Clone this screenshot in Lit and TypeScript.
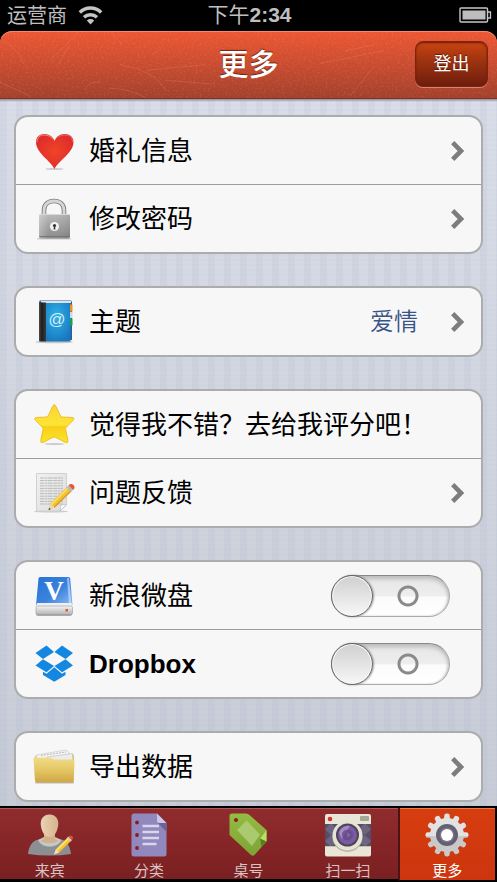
import { LitElement, html, css, svg, nothing, SVGTemplateResult } from "lit";
import { customElement, property } from "lit/decorators.js";
import { classMap } from "lit/directives/class-map.js";

interface Row {
  icon: string;
  label: string;
  kind: "link" | "plain" | "switch";
  value?: string;
}

const groups: Row[][] = [
  [
    { icon: "heart", label: "婚礼信息", kind: "link" },
    { icon: "lock", label: "修改密码", kind: "link" },
  ],
  [{ icon: "book", label: "主题", kind: "link", value: "爱情" }],
  [
    { icon: "star", label: "觉得我不错？去给我评分吧！", kind: "plain" },
    { icon: "note", label: "问题反馈", kind: "link" },
  ],
  [
    { icon: "disk", label: "新浪微盘", kind: "switch" },
    { icon: "dropbox", label: "Dropbox", kind: "switch" },
  ],
  [{ icon: "folder", label: "导出数据", kind: "link" }],
];

const tabs = [
  { icon: "guest", label: "来宾" },
  { icon: "list", label: "分类" },
  { icon: "tag", label: "桌号" },
  { icon: "camera", label: "扫一扫" },
  { icon: "gear", label: "更多", active: true },
];

const gearTeeth = Array.from({ length: 12 }, (_, i) => i * 30);
const noteLines = Array.from({ length: 11 }, (_, i) => 7 + i * 2.6);

// Row icons are drawn on a 42x44 board.
const rowIcons: Record<string, SVGTemplateResult> = {
  heart: svg`
    <defs>
      <radialGradient id="h" cx=".5" cy=".5" r=".6">
        <stop offset="0" stop-color="#f04426"/><stop offset="1" stop-color="#dc2a2c"/>
      </radialGradient>
    </defs>
    <ellipse cx="21.500" cy="40" rx="9" ry="1" fill="#ccc"/>
    <path d="M21.500 40 C18 32 3 24 3 13 C3 8 6.500 5 11.500 5 C16.500 5 20 8 21.700 12 C23 8 26.500 5 31.500 5 C37 5 40.500 8 40.500 13 C40.500 24 25 32 21.500 40Z" fill="url(#h)"/>
    <path d="M4 13 C4 8.500 7 6 11.500 6 C15 6 18 7.500 20 10.500" fill="none" stroke="#f58a80" stroke-width="1"/>
    <path d="M25 8.500 C27 6.500 30 6 32 6 C36.500 6 39.500 8.500 39.500 13" fill="none" stroke="#ee6a62" stroke-width="1"/>`,
  lock: svg`
    <defs>
      <linearGradient id="l" x1="0" y1="0" x2="0" y2="1">
        <stop offset="0" stop-color="#b9b9b9"/><stop offset=".5" stop-color="#a2a2a2"/><stop offset="1" stop-color="#8a8a8a"/>
      </linearGradient>
      <linearGradient id="l2" x1="0" y1="0" x2="1" y2="0">
        <stop offset="0" stop-color="#fff" stop-opacity=".3"/><stop offset=".3" stop-color="#fff" stop-opacity="0"/><stop offset="1" stop-color="#000" stop-opacity=".08"/>
      </linearGradient>
    </defs>
    <path d="M11 21 V13.500 C11 7.500 15 4 21 4 C27 4 31 7.500 31 13.500 V21" fill="none" stroke="#7e7e7e" stroke-width="4.600"/>
    <path d="M11 21 V13.500 C11 7.500 15 4 21 4 C27 4 31 7.500 31 13.500 V21" fill="none" stroke="#d6d6d6" stroke-width="2.800"/>
    <rect x="4" y="41" width="34" height="1.500" rx=".7" fill="#ccc"/>
    <rect x="6" y="17" width="31" height="24.500" rx="2" fill="url(#l)"/>
    <rect x="6" y="17" width="31" height="24.500" rx="2" fill="url(#l2)"/>
    <path d="M7 17.500 H36" stroke="#d8d8d8"/>
    <path d="M6.500 39.500 H36.500" stroke="#777"/>
    <circle cx="21.500" cy="29.500" r="4.500" fill="#f2f2f2"/>
    <circle cx="21.500" cy="28.500" r="1.600" fill="#333"/>
    <path d="M20.900 29 H22.100 L22.400 32.500 H20.600Z" fill="#333"/>`,
  book: svg`
    <defs>
      <radialGradient id="b" cx=".45" cy=".35" r=".7">
        <stop offset="0" stop-color="#2ab4ea"/><stop offset="1" stop-color="#1a76bf"/>
      </radialGradient>
      <linearGradient id="b2" x1="0" y1="0" x2="1" y2="0">
        <stop offset="0" stop-color="#4a4a4a"/><stop offset=".4" stop-color="#1e1e1e"/><stop offset="1" stop-color="#3a3a3a"/>
      </linearGradient>
    </defs>
    <ellipse cx="21" cy="42" rx="19" ry="1.300" fill="#c6c6c6"/>
    <path d="M6.500 0.500 H38 L39 2 V40 H12Z" fill="#2a5f99"/>
    <path d="M7.500 1 H38 V3 H9Z" fill="#dfe3e6"/>
    <rect x="12" y="3" width="25.500" height="38.500" fill="url(#b)"/>
    <path d="M6 1.500 L8 2.500 H13 V41.500 H7 L6 41Z" fill="url(#b2)"/>
    <path d="M37 4.500 H39.500 V11.500 H37Z" fill="#f39019"/>
    <path d="M37 12 H39.500 V18 H37Z" fill="#cfd8dd"/>
    <path d="M37 18.500 H39.500 V25.500 H37Z" fill="#17a05a"/>
    <text x="24" y="25" text-anchor="middle" class="at">@</text>`,
  star: svg`
    <defs>
      <linearGradient id="s" x1="0" y1="0" x2="0" y2="1">
        <stop offset="0" stop-color="#fbd43a"/><stop offset=".54" stop-color="#fde534"/><stop offset=".58" stop-color="#f8cf1c"/><stop offset="1" stop-color="#fbe524"/>
      </linearGradient>
    </defs>
    <ellipse cx="21.500" cy="41" rx="10" ry="1" fill="#ccc"/>
    <path d="M21.300 1.500 C23 1.500 26.500 12.500 28.300 13.700 C30 14.700 40.500 13.700 41 15.500 C41.400 17 33.200 23.500 32.600 25.300 C32.200 27 36 38.500 34.500 39.600 C33 40.600 23.500 34 21.300 34 C19.100 34 9.700 40.600 8.200 39.600 C6.700 38.500 10.500 27 10 25.300 C9.400 23.500 1.200 17 1.600 15.500 C2.100 13.700 12.600 14.700 14.300 13.700 C16.100 12.500 19.600 1.500 21.300 1.500Z" fill="url(#s)" stroke="#eebb22" stroke-width="1"/>`,
  note: svg`
    <defs>
      <linearGradient id="n" x1="0" y1="0" x2="1" y2="1">
        <stop offset="0" stop-color="#f1f1f1"/><stop offset="1" stop-color="#dcdcdc"/>
      </linearGradient>
    </defs>
    <ellipse cx="18" cy="40.500" rx="17" ry="1" fill="#ccc"/>
    <path d="M3.500 2.500 H33.500 V34 L27 40 H3.500Z" fill="url(#n)" stroke="#d0d0d0"/>
    ${noteLines.map((y) => svg`<path d=${`M7 ${y} H30`} stroke="#b9b9b9" stroke-width="1" stroke-dasharray="4 .6 2.500 .5 5 .7"/>`)}
    <path d="M27 40 L28 34 L33.500 33.500Z" fill="#fff" stroke="#bbb" stroke-width=".7"/>
    <path d="M15.500 39 L17.500 32.500 L34.500 15.500 L38.500 20 L21.500 36.500Z" fill="#f3c231"/>
    <path d="M18.500 33.500 L35.500 16.500" stroke="#fbe06c" stroke-width="1.600"/>
    <path d="M21 36.500 L38 20" stroke="#d79a22" stroke-width="1.200"/>
    <path d="M15.500 39 L17.500 32.500 L21.500 36.500Z" fill="#eed9ad"/>
    <path d="M15.500 39 L16.200 36.700 L17.800 38.200Z" fill="#333"/>
    <path d="M33.500 16.500 L35.500 14.500 L40 19 L38 21Z" fill="#aebdc6"/>
    <path d="M35.500 14.500 C37 12.500 39 12.500 40.500 14 C42 15.500 42 17.500 40 19Z" fill="#e5583a"/>`,
  disk: svg`
    <defs>
      <linearGradient id="d" x1="0" y1="0" x2="1" y2="1">
        <stop offset="0" stop-color="#2874d4"/><stop offset=".55" stop-color="#3a82dd"/><stop offset="1" stop-color="#8dbcf3"/>
      </linearGradient>
      <linearGradient id="d2" x1="0" y1="0" x2="0" y2="1">
        <stop offset="0" stop-color="#f4f4f4"/><stop offset="1" stop-color="#b4b4b4"/>
      </linearGradient>
    </defs>
    <rect x="3" y="38" width="36" height="4" rx="2" fill="#aaa"/>
    <path d="M7 3 H35.500 Q37 3 37.200 4.500 L39.500 31 H3 L5.500 4.500 Q5.700 3 7 3Z" fill="url(#d)"/>
    <path d="M34 4 H36 L38.500 30 H36Z" fill="#d5e6fb" opacity=".6"/>
    <path d="M4 29 L3 33 H39.500 L38.500 29Z" fill="#eef0f2"/>
    <rect x="3" y="32" width="36.500" height="8.500" rx="1.500" fill="url(#d2)" stroke="#999" stroke-width=".6"/>
    <rect x="32.500" y="35" width="2.500" height="2.500" fill="#e4572e"/>
    <text x="21" y="26" text-anchor="middle" class="vee">V</text>`,
  dropbox: svg`
    <g fill="#1487e0">
      <path d="M2.500 11 L13.500 3.500 L21 10 L10 17Z"/>
      <path d="M40 11 L29 3.500 L21.500 10 L32.500 17Z"/>
      <path d="M2.500 23.500 L10 17.200 L21 24 L13.500 30.300Z"/>
      <path d="M40 23.500 L32.500 17.200 L21.500 24 L29 30.300Z"/>
      <path d="M10 29.800 L13.500 31.700 L21.250 25.200 L29 31.700 L32.500 29.800 V33 L21.250 39.700 L10 33Z"/>
    </g>`,
  folder: svg`
    <defs>
      <linearGradient id="f" x1="0" y1="0" x2="0" y2="1">
        <stop offset="0" stop-color="#f0dc88"/><stop offset=".5" stop-color="#e4c763"/><stop offset="1" stop-color="#cfa545"/>
      </linearGradient>
    </defs>
    <rect x="2" y="36.500" width="39" height="2" rx="1" fill="#bbb"/>
    <path d="M1.500 13 L2.500 10.500 H13 L15 9 H39 Q41 9 41 11 V30 H2Z" fill="#dcc069"/>
    <path d="M3 12 L3.500 10 L33 5 L36 7.500 L37 18 H4Z" fill="#f4f4f4" stroke="#c4c4c4" stroke-width=".6"/>
    <path d="M8 10.500 L33 7" stroke="#aaa" stroke-dasharray="2 1" stroke-width=".8"/>
    <path d="M14 12 L39.500 8.500 L40 16 H14Z" fill="#ececec" stroke="#bbb" stroke-width=".6"/>
    <path d="M.500 14 Q.500 12.500 2 12.500 H16 Q18 12.500 19 13.500 Q20 14.500 22 14.500 H39.500 Q41.500 14.500 41.500 16 L40.800 35.500 Q40.700 37.500 39 37.500 H4 Q2.200 37.500 2 35.500Z" fill="url(#f)"/>`,
};

// Tab icons are drawn on a 48x44 board.
const tabIcons: Record<string, SVGTemplateResult> = {
  guest: svg`
    <defs>
      <linearGradient id="g" x1="0" y1="0" x2="1" y2="0">
        <stop offset="0" stop-color="#e9d2b4"/><stop offset="1" stop-color="#d6b48c"/>
      </linearGradient>
    </defs>
    <path d="M2 41 C3 33 6 27.500 13 26.500 L19 25 H29 L35 26.500 C41 27.500 44 33 45 41 Q24 44 2 41Z" fill="#8c8f92"/>
    <path d="M12 27 L18 24 H29 L35.500 27 C33 32 28 33.500 24 33.500 C19 33.500 14.500 32 12 27Z" fill="#c3c8cc"/>
    <path d="M18 17 H29 V25 C30 27 31 27 32.500 27.500 C29 31 18 31 14.500 27.500 C16 27 18 27 18 25Z" fill="#d2b088"/>
    <path d="M23.500 1.500 C29.500 1.500 32.500 6 32.300 11 C32 17 29 24 23.500 24 C18 24 15 17 14.700 11 C14.500 6 17.500 1.500 23.500 1.500Z" fill="url(#g)"/>
    <path d="M28 41.500 L30 36 L42 24 L45.500 27.500 L33 39.500Z" fill="#f5c531"/>
    <path d="M31 37 L43 25" stroke="#fde98a" stroke-width="1.300"/>
    <path d="M28 41.500 L30 36 L33 39.500Z" fill="#f0e0bd"/>
    <path d="M41 25 L42.500 23.500 L46 27 L44.500 28.500Z" fill="#c5ccd2"/>
    <path d="M42.500 23.500 Q44.500 21.500 46.300 23.200 Q48 25 46 27Z" fill="#e0502f"/>`,
  list: svg`
    <path d="M8.500 .500 H32 L41.500 10 V41 Q41.500 43.500 39 43.500 H9 Q6.500 43.500 6.500 41 V3 Q6.500 .500 9 .500Z" fill="#9189bd"/>
    <path d="M32 .500 L41.500 10 H34.500 Q32 10 32 8Z" fill="#cdc8e8"/>
    <path d="M33 10 H41.500 V19Z" fill="#6b6492"/>
    <g fill="#861f22"><circle cx="12" cy="9.500" r="1.900"/><circle cx="12" cy="22" r="1.900"/><circle cx="12" cy="35" r="1.900"/></g>
    <path d="M17.500 13 H34 M17.500 19 H34 M17.500 25 H34 M17.500 31 H31.500" stroke="#d9d5ee" stroke-width="2.400"/>`,
  tag: svg`
    <defs>
      <linearGradient id="t" x1="0" y1="0" x2="0" y2="1">
        <stop offset="0" stop-color="#94bb42"/><stop offset="1" stop-color="#7ea335"/>
      </linearGradient>
    </defs>
    <path d="M8 .500 H22 Q24 .500 25.500 2 L42.500 17 V28.500 L30.500 42 Q29 43.500 27 42 L5.500 22 V3 Q5.500 .500 8 .500Z" fill="url(#t)"/>
    <path d="M13 17 L22.500 7.500 L36 21.500 L28 33Z" fill="#a9ca6e"/>
    <path d="M42.500 17 L36 26 L42.500 28.500Z" fill="#b9e062"/>
    <path d="M36 25.500 L42.500 28.500 L37.500 34Z" fill="#557f22"/>
    <circle cx="12" cy="7" r="2" fill="#861f22"/>`,
  camera: svg`
    <defs>
      <clipPath id="c"><rect x="1" y="11" width="46" height="22"/></clipPath>
    </defs>
    <rect x="1" y="1" width="46" height="42.500" rx="2" fill="#e9e6d8"/>
    <rect x="1" y="11" width="46" height="22" fill="#554e66"/>
    <g clip-path="url(#c)" fill="#6c6480">
      <path d="M1 16 L7 10 L13 16 L7 22Z M1 28 L7 22 L13 28 L7 34Z M35 16 L41 10 L47 16 L41 22Z M35 28 L41 22 L47 28 L41 34Z"/>
    </g>
    <rect x="1" y="33" width="46" height="1" fill="#c5c0b0"/>
    <circle cx="6" cy="6" r="2.300" fill="#d5322d"/>
    <rect x="36" y="3" width="9" height="5" rx="1" fill="#a5a696"/>
    <circle cx="23.500" cy="24" r="15" fill="#b9b4a4"/>
    <circle cx="23.500" cy="22.500" r="15" fill="#e7e4d6"/>
    <circle cx="23.500" cy="22" r="11.500" fill="#4c4659"/>
    <circle cx="23.500" cy="22" r="9.500" fill="#7a5aa0"/>
    <path d="M15 20 A9.500 9.500 0 0 1 26 13 L18 26Z" fill="#a58bc4"/>
    <circle cx="23.500" cy="22" r="5.500" fill="#644889" opacity=".8"/>
    <path d="M23 19 L27 22 L23 25Z" fill="#7f62a4"/>`,
  gear: svg`
    <defs>
      <linearGradient id="e" gradientUnits="userSpaceOnUse" x1="0" y1="0" x2="0" y2="44">
        <stop offset=".52" stop-color="#e2e2e2"/><stop offset=".52" stop-color="#c9c9c9"/>
      </linearGradient>
      <mask id="m">
        <circle cx="24" cy="22" r="17" fill="#fff"/>
        ${gearTeeth.map((a) => svg`<rect x="21.200" y="0.500" width="5.600" height="9" rx="2.400" fill="#fff" transform=${`rotate(${a} 24 22)`}/>`)}
      </mask>
    </defs>
    <rect width="48" height="44" fill="url(#e)" mask="url(#m)"/>
    <circle cx="24" cy="22" r="11" fill="#655f74"/>
    <circle cx="24" cy="22" r="7.500" fill="#7a7489"/>
    <circle cx="24" cy="22" r="6" fill="#fff"/>`,
};

@customElement("status-bar")
class StatusBar extends LitElement {
  static styles = css`
    :host {
      display: grid;
      grid-template-columns: 1fr auto 1fr;
      align-items: center;
      height: 31px;
      box-sizing: border-box;
      padding: 0 5px 1px 7px;
      background: #000;
      color: #bfbfbf;
      font-size: 20px;
      line-height: 30px;
    }
    .left { display: flex; align-items: center; gap: 11px; }
    .time { font-family: "Liberation Sans", "Noto Sans CJK SC", sans-serif; font-size: 21px; }
    .digits { font-weight: 700; }
    .battery { justify-self: end; }
  `;
  render() {
    return html`
      <div class="left">
        <span>运营商</span>
        <svg width="26" height="20" viewBox="0 0 26 20" aria-label="Wi-Fi">
          <g fill="none" stroke="#c4c4c4" stroke-width="3.400">
            <path d="M1.800 7.500 A15 15 0 0 1 23.200 7.500"/>
            <path d="M6 12.300 A9.500 9.500 0 0 1 19 12.300"/>
          </g>
          <path d="M8.800 15.400 A6 6 0 0 1 16.200 15.400 L12.500 19.500Z" fill="#c4c4c4"/>
        </svg>
      </div>
      <div class="time">下午<span class="digits">2:34</span></div>
      <svg class="battery" width="33" height="16" viewBox="0 0 33 16" aria-label="电池">
        <rect x="1" y="1" width="27.500" height="14" rx="1" fill="none" stroke="#c8c8c8" stroke-width="1.400"/>
        <rect x="3.500" y="3.500" width="23" height="9" fill="#bdbdbd"/>
        <path d="M29 5 H31.500 V11 H29" fill="none" stroke="#c8c8c8" stroke-width="1.300"/>
      </svg>`;
  }
}

@customElement("nav-header")
class NavHeader extends LitElement {
  static styles = css`
    :host { display: block; background: #000; }
    .bar {
      display: grid;
      grid-template-columns: 1fr auto 1fr;
      align-items: center;
      position: relative;
      height: 68px;
      box-sizing: border-box;
      padding: 0 9px 2px;
      border-radius: 12px 12px 0 0;
      overflow: hidden;
      border-bottom: 1px solid #8a2f1c;
      background: linear-gradient(#ee5733, #c94c30 50%, #a3412c);
      box-shadow: inset 0 1px 0 #f58a68;
    }
    .scratches { position: absolute; inset: 0; width: 100%; height: 100%; }
    .title {
      grid-column: 2;
      position: relative;
      margin: 0;
      padding-bottom: 4px;
      color: #fff;
      font-size: 30px;
      font-weight: 500;
      line-height: 40px;
      text-shadow: 0 -1px 1px #6b2415;
    }
    .logout {
      position: relative;
      justify-self: end;
      width: 73px;
      height: 46px;
      padding: 0 0 4px;
      border: 1px solid #7c2410;
      border-radius: 8px;
      background: linear-gradient(#cc4411, #a0340f 40%, #6e1d0e);
      box-shadow: inset 0 1px 2px #6a1c0c, 0 1px 0 #d98570;
      color: #fff;
      font: 400 18px/24px "Noto Sans CJK SC", sans-serif;
      text-shadow: 0 -1px 1px #5a1708;
    }
  `;
  render() {
    return html`
      <header class="bar">
        <svg class="scratches" viewBox="0 0 497 68" preserveAspectRatio="none" aria-hidden="true">
          <filter id="grain">
            <feTurbulence type="fractalNoise" baseFrequency=".5" numOctaves="3" seed="4"/>
            <feColorMatrix values="0 0 0 0 1  0 0 0 0 .7  0 0 0 0 .6  0 0 0 2.500 -1.200"/>
          </filter>
          <rect width="497" height="68" filter="url(#grain)" opacity=".13"/>
          <g fill="none" stroke="#f3a58e" stroke-width="1" opacity=".2">
            <path d="M50 30 L78 2 M58 34 L70 14 M0 52 L30 66 M100 52 Q90 50 84 60 M110 58 Q150 60 168 90"/>
            <path d="M120 34 Q155 40 166 60 M146 40 L206 34 M152 24 L162 18 M165 50 L215 54 M320 33 L384 20"/>
            <path d="M350 66 L374 36 M345 20 L375 14 M4 10 Q20 20 24 34 M110 0 L122 14"/>
          </g>
        </svg>
        <h1 class="title">更多</h1>
        <button class="logout" type="button">登出</button>
      </header>`;
  }
}

@customElement("toggle-switch")
class ToggleSwitch extends LitElement {
  @property() name = "";
  static styles = css`
    :host { display: block; }
    .switch {
      display: flex;
      align-items: center;
      appearance: none;
      width: 119px;
      height: 42px;
      margin: 0;
      box-sizing: border-box;
      border-radius: 21px;
      border: 1px solid #aaa;
      border-top-color: #888;
      background:
        radial-gradient(circle at 76px 20px, transparent 7px, #8a8a8a 8px, #8a8a8a 10px, transparent 11px),
        linear-gradient(#e6e6e6, #eee 50%, #fbfbfb 52%, #fff);
      box-shadow: inset 0 3px 4px #bbb, inset -1px 0 2px #ccc;
    }
    .switch::before {
      content: "";
      width: 42px;
      height: 42px;
      margin-left: -1px;
      box-sizing: border-box;
      border-radius: 50%;
      border: 1px solid #666;
      background: linear-gradient(#d0d0d0, #f7f7f7);
      box-shadow: inset 0 0 0 1px #f8f8f8, 1px 0 2px #999;
    }
    .switch:checked { background: #4b83d6; }
    .switch:checked::before { margin-left: 76px; }
  `;
  render() {
    return html`<input class="switch" type="checkbox" role="switch" aria-label=${this.name} />`;
  }
}

@customElement("setting-row")
class SettingRow extends LitElement {
  @property({ attribute: false }) row!: Row;
  static styles = css`
    :host { display: block; }
    .row {
      display: flex;
      align-items: center;
      width: 100%;
      height: 67px;
      box-sizing: border-box;
      padding: 0 16px 0 17px;
      border: 0;
      background: none;
      color: #000;
      font: 400 26px/36px "Liberation Sans", "Noto Sans CJK SC", sans-serif;
      text-align: left;
    }
    .toggle { padding-right: 31px; }
    .icon { flex: none; width: 42px; height: 44px; margin-right: 14px; }
    .label { flex: 1; white-space: nowrap; }
    .latin { font-weight: 700; }
    .value { margin-right: 33px; color: #385487; font-size: 24px; font-weight: 350; }
    .at { font: 17px "Liberation Sans", sans-serif; fill: #d9eaf4; }
    .vee { font: bold 27px "Liberation Serif", serif; fill: #fff; }
  `;
  render() {
    const { icon, label, kind, value } = this.row;
    const body = html`
      <svg class="icon" viewBox="0 0 42 44" aria-hidden="true">${rowIcons[icon]}</svg>
      <span class=${classMap({ label: true, latin: label === "Dropbox" })}>${label}</span>`;
    if (kind === "switch") {
      return html`<div class="row toggle">${body}<toggle-switch name=${label}></toggle-switch></div>`;
    }
    return html`
      <button class="row" type="button">
        ${body}
        ${value ? html`<span class="value">${value}</span>` : nothing}
        ${kind === "link"
          ? html`<svg width="14" height="20" viewBox="0 0 14 20" aria-hidden="true">
              <path d="M1.700 1.700 L10 10 L1.700 18.300" fill="none" stroke="#7d7d7d" stroke-width="4.600"/>
            </svg>`
          : nothing}
      </button>`;
  }
}

@customElement("tab-bar")
class TabBar extends LitElement {
  static styles = css`
    :host { display: block; position: sticky; bottom: 0; }
    .tabs {
      display: grid;
      grid-template-columns: repeat(5, 1fr);
      padding: 2px 0 1px;
      background: #000;
    }
    .tab {
      display: flex;
      flex-direction: column;
      align-items: center;
      height: 73px;
      box-sizing: border-box;
      padding: 5px 0 0;
      border: 0;
      border-bottom: 2px solid #000;
      background: linear-gradient(#8f2c2e, #862527 50%, #7a2022);
      box-shadow: inset 0 1px 0 #b05a5a;
      color: #d8c4c4;
      font: 400 15px/18px "Noto Sans CJK SC", sans-serif;
    }
    .active {
      border-width: 0 2px 1px;
      border-style: solid;
      border-color: #000;
      border-left-color: #4a1414;
      background: linear-gradient(#d63e10, #cc350e);
      box-shadow: inset 0 1px 0 #ee7a52;
      color: #fff;
    }
    .icon { flex: none; width: 48px; height: 44px; margin-bottom: 4px; }
  `;
  render() {
    return html`<nav class="tabs">
      ${tabs.map((t) => html`
        <button class=${classMap({ tab: true, active: !!t.active })} type="button">
          <svg class="icon" viewBox="0 0 48 44" aria-hidden="true">${tabIcons[t.icon]}</svg>
          <span>${t.label}</span>
        </button>`)}
    </nav>`;
  }
}

@customElement("app-root")
class AppRoot extends LitElement {
  static styles = css`
    :host {
      display: flex;
      flex-direction: column;
      min-height: 100vh;
      font-family: "Noto Sans CJK SC", sans-serif;
    }
    .content {
      flex: 1;
      display: flex;
      flex-direction: column;
      gap: 32px;
      padding: 16px 14px 4px;
      background:
        linear-gradient(#8a8fa0, transparent 3px),
        repeating-linear-gradient(90deg, rgba(160, 172, 200, 0.12) 0 7px, transparent 7px 16px),
        repeating-linear-gradient(rgba(170, 180, 205, 0.05) 0 2px, transparent 2px 5px),
        linear-gradient(#d9dde7, #c7ccd6);
    }
    .group {
      border: 2px solid #acacac;
      border-radius: 14px;
      background: #f7f7f7;
      overflow: hidden;
    }
    .item + .item { border-top: 1px solid #9c9c9c; }
  `;
  render() {
    return html`
      <status-bar></status-bar>
      <nav-header></nav-header>
      <main class="content">
        ${groups.map((g) => html`
          <section class="group">
            ${g.map((r) => html`<setting-row class="item" .row=${r}></setting-row>`)}
          </section>`)}
      </main>
      <tab-bar></tab-bar>`;
  }
}
